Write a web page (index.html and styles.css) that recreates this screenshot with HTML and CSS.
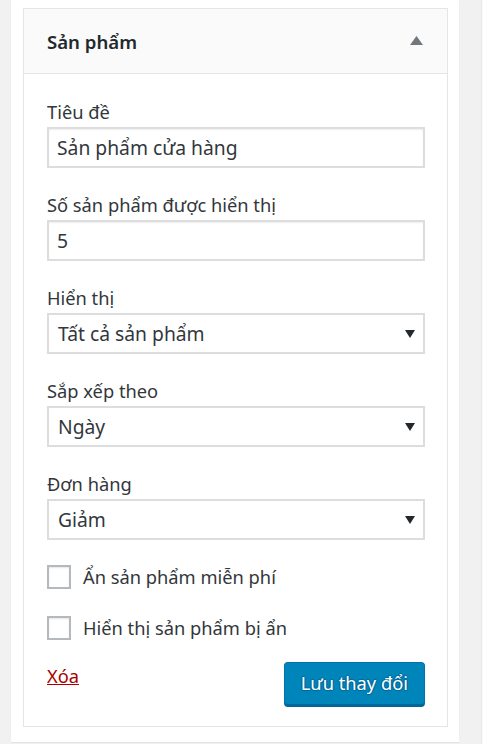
FILE: index.html
```html
<!DOCTYPE html>
<html lang="vi">
<head>
<meta charset="utf-8">
<title>Sản phẩm</title>
<link rel="stylesheet" href="styles.css">
</head>
<body>
<div class="page">
  <div class="panel">
    <div class="widget">
      <div class="widget-head">
        <h3 class="widget-title">Sản phẩm</h3>
        <span class="toggle" aria-hidden="true">
          <svg width="13" height="9" viewBox="0 0 13 9"><polygon points="6.5,0 13,9 0,9" fill="#72777c"/></svg>
        </span>
      </div>
      <div class="widget-body">
        <div class="field">
          <label class="label" for="f-title">Tiêu đề</label>
          <input class="control" id="f-title" type="text" value="Sản phẩm cửa hàng">
        </div>
        <div class="field">
          <label class="label" for="f-num">Số sản phẩm được hiển thị</label>
          <input class="control" id="f-num" type="text" value="5">
        </div>
        <div class="field">
          <span class="label">Hiển thị</span>
          <div class="control select"><span>Tất cả sản phẩm</span><i class="caret"></i></div>
        </div>
        <div class="field">
          <span class="label">Sắp xếp theo</span>
          <div class="control select"><span>Ngày</span><i class="caret"></i></div>
        </div>
        <div class="field">
          <span class="label">Đơn hàng</span>
          <div class="control select"><span>Giảm</span><i class="caret"></i></div>
        </div>
        <div class="check first">
          <span class="box"></span><span class="check-text">Ẩn sản phẩm miễn phí</span>
        </div>
        <div class="check second">
          <span class="box"></span><span class="check-text">Hiển thị sản phẩm bị ẩn</span>
        </div>
        <div class="actions">
          <a class="delete" href="#">Xóa</a>
          <button class="save" type="button">Lưu thay đổi</button>
        </div>
      </div>
    </div>
  </div>
  <div class="sliver"></div>
</div>
</body>
</html>
```

FILE: styles.css
```css
* { box-sizing: border-box; }
html, body { margin: 0; padding: 0; }
body {
  background: #f1f1f1;
  font-family: "Noto Sans", "Open Sans", sans-serif;
  color: #32373c;
  width: 483px;
  height: 744px;
  overflow: hidden;
}
.page {
  display: flex;
  align-items: flex-start;
  padding-left: 11px;
}
.panel {
  width: 448px;
  height: 742px;
  background: #fff;
  padding: 8px 11px 0 12px;
  box-shadow: 0 1px 1px rgba(0,0,0,0.05);
}
.sliver {
  margin-left: 22px;
  width: 4px;
  height: 744px;
  background: #fbfbfb;
  border-left: 1px solid #e8e8e8;
}
.widget {
  width: 425px;
  border: 1px solid #e5e5e5;
  background: #fff;
}
.widget-head {
  height: 65px;
  background: #fafafa;
  border-bottom: 1px solid #e5e5e5;
  display: flex;
  align-items: center;
  justify-content: space-between;
  padding: 0 24px 0 23px;
}
.widget-title {
  margin: 0;
  font-size: 18.6px;
  font-weight: 600;
  line-height: 64px;
  color: #23282d;
  padding-top: 1px;
}
.toggle { display: flex; margin-top: -2px; }
.widget-body {
  padding: 24px 22px 21px 23px;
}
.field { margin-bottom: 23px; }
.label {
  display: block;
  font-size: 18.3px;
  line-height: 28px;
  margin-bottom: 1px;
  color: #32373c;
}
.control {
  display: block;
  width: 378px;
  height: 41px;
  margin: 0;
  border: 2px solid #dddddd;
  box-shadow: inset 0 1px 2px rgba(0,0,0,0.07);
  background: #fff;
  font-family: inherit;
  font-size: 19.3px;
  color: #32373c;
  padding: 0 8px;
  outline: none;
}
.select {
  display: flex;
  align-items: center;
  justify-content: space-between;
  padding: 0 8px 0 9px;
  box-shadow: none;
}
.caret {
  width: 0;
  height: 0;
  border-left: 5px solid transparent;
  border-right: 5px solid transparent;
  border-top: 8px solid #23282d;
  margin-top: 1px;
}
.check {
  display: flex;
  align-items: center;
  gap: 12px;
  height: 28px;
}
.check.first { margin-top: 2px; }
.check.second { margin-top: 23px; }
.box {
  width: 24px;
  height: 24px;
  border: 2px solid #b4b9be;
  box-shadow: inset 0 1px 2px rgba(0,0,0,0.1);
  background: #fff;
}
.check-text {
  font-size: 18.3px;
  line-height: 28px;
  color: #32373c;
}
.actions {
  display: flex;
  justify-content: space-between;
  align-items: flex-start;
  margin-top: 20px;
}
.delete {
  font-size: 18.3px;
  line-height: 28px;
  color: #a00;
  text-decoration: underline;
}
.save {
  height: 43px;
  padding: 0 16px 2px;
  background: #0085ba;
  border: 1px solid #0073aa;
  border-bottom-color: #006799;
  border-radius: 4px;
  box-shadow: 0 2px 0 #006799;
  color: #fff;
  font-family: inherit;
  font-size: 18.3px;
  text-shadow: 0 -1px 1px #006799, 1px 0 1px #006799, 0 1px 1px #006799, -1px 0 1px #006799;
  cursor: pointer;
}
```
